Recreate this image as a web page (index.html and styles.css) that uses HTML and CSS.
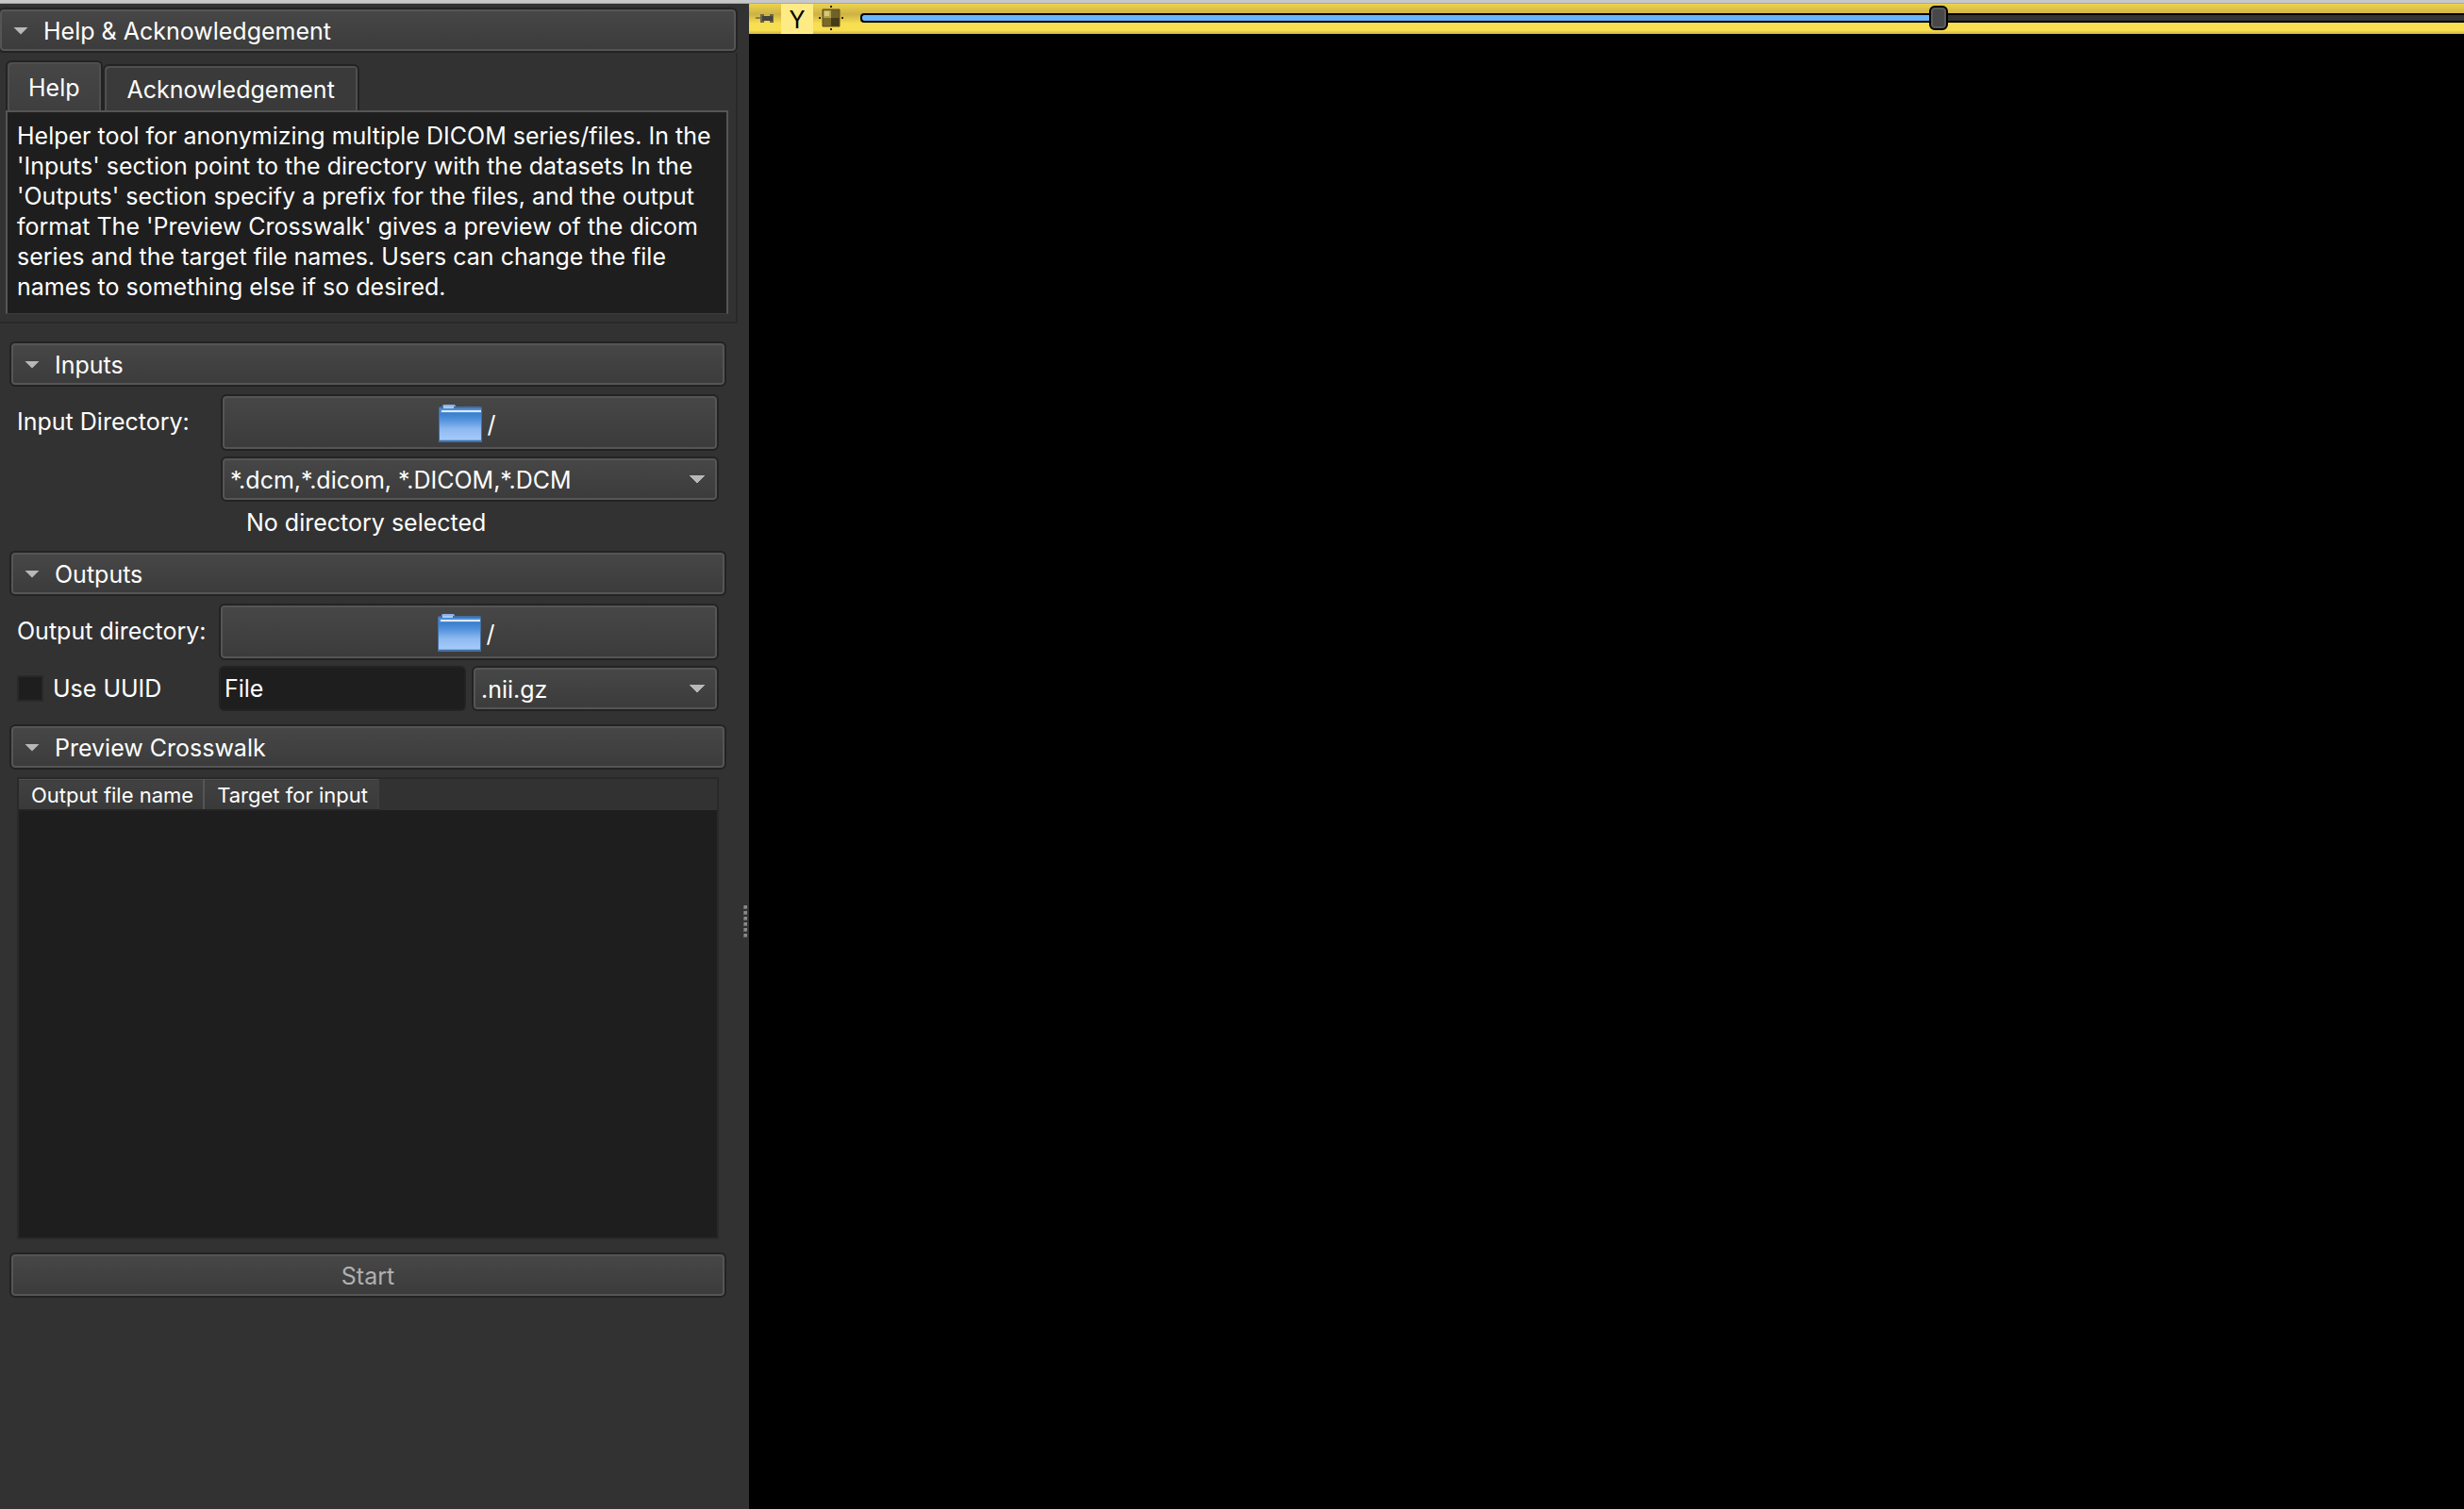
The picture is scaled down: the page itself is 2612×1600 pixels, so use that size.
FILE: index.html
```html
<!DOCTYPE html>
<html lang="en">
<head>
<meta charset="utf-8">
<title>DICOM anonymizer</title>
<link rel="stylesheet" href="styles.css">
</head>
<body>
<div class="app">
  <aside class="panel">
    <section class="help">
      <button class="bar bar-help" type="button"><span class="caret"></span>Help &amp; Acknowledgement</button>
      <div class="help-frame">
        <div class="tabs" role="tablist">
          <button class="tab tab-active" type="button" role="tab" aria-selected="true">Help</button>
          <button class="tab" type="button" role="tab" aria-selected="false">Acknowledgement</button>
        </div>
        <p class="help-text">Helper tool for anonymizing multiple DICOM series/files. In the<br>'Inputs' section point to the directory with the datasets In the<br>'Outputs' section specify a prefix for the files, and the output<br>format The 'Preview Crosswalk' gives a preview of the dicom<br>series and the target file names. Users can change the file<br>names to something else if so desired.</p>
      </div>
    </section>

    <div class="module">
      <button class="bar" type="button"><span class="caret"></span>Inputs</button>
      <div class="form form-inputs">
        <label class="dir-label" for="input-dir">Input Directory:</label>
        <button class="raised dir" id="input-dir" type="button">
          <svg class="folder" width="48" height="42" viewBox="0 0 48 42" aria-hidden="true"><use href="#folder"/></svg>/
        </button>
        <select class="raised combo second" aria-label="File filter"><option>*.dcm,*.dicom, *.DICOM,*.DCM</option></select>
        <span class="status second">No directory selected</span>
      </div>

      <button class="bar" type="button"><span class="caret"></span>Outputs</button>
      <div class="form form-outputs">
        <label class="dir-label" for="output-dir">Output directory:</label>
        <button class="raised dir" id="output-dir" type="button">
          <svg class="folder" width="48" height="42" viewBox="0 0 48 42" aria-hidden="true"><use href="#folder"/></svg>/
        </button>
        <label class="check"><input type="checkbox">Use UUID</label>
        <div class="pair">
          <input class="field" type="text" value="File" aria-label="File prefix">
          <select class="raised combo" aria-label="Output format"><option>.nii.gz</option></select>
        </div>
      </div>

      <button class="bar" type="button"><span class="caret"></span>Preview Crosswalk</button>
      <div class="table-box">
        <table>
          <thead><tr><th>Output file name</th><th>Target for input</th></tr></thead>
        </table>
      </div>
      <button class="bar start" type="button" disabled>Start</button>
    </div>
    <div class="grip" aria-hidden="true"><i></i><i></i><i></i><i></i><i></i><i></i></div>
  </aside>

  <main class="view">
    <div class="slicebar">
      <button class="tool pin" type="button" aria-label="Pin">
        <svg width="20" height="14" viewBox="0 0 20 14"><path d="M0 7h7" stroke="#8f7f3a" stroke-width="2"/><path d="M5 3h4v2h6V3h4v9h-4v-2H9v2H5z" fill="#6b6648"/><path d="M7 5h11v5H7z" fill="#45443c"/></svg>
      </button>
      <button class="tool letter" type="button">Y</button>
      <button class="tool fit" type="button" aria-label="Fit to window">
        <svg width="26" height="26" viewBox="0 0 26 26"><path d="M4 4h18v18H4z" fill="#776725"/><path d="M5 5h8v8H5z" fill="#b3a14a"/><path d="M6 6h5v5H6z" fill="#d8c878"/><path d="M13 5h8v8h-8z" fill="#6f6128"/><path d="M13 13h9v9h-9z" fill="#463c16"/><path d="M5 13h8v8H5z" fill="#7a6a2a"/><path d="M4 4h18v18H4z" fill="none" stroke="#5c4f1e"/><path d="M12 0h2v2h-2zM12 24h2v2h-2zM0 12h2v2H0zM24 12h2v2h-2z" fill="#2c270f"/></svg>
      </button>
      <input class="slider" type="range" min="0" max="1000" value="674" style="--fill: 67.4%" aria-label="Slice offset">
    </div>
  </main>
</div>
<svg class="defs" width="0" height="0" aria-hidden="true">
  <defs>
    <linearGradient id="folder-face" x1="0" y1="0" x2="0" y2="1">
      <stop offset="0" stop-color="#3a7fcb"/><stop offset=".25" stop-color="#5393df"/><stop offset=".6" stop-color="#8fbaf0"/><stop offset="1" stop-color="#a6cbfb"/>
    </linearGradient>
    <symbol id="folder" viewBox="0 0 48 42">
      <path d="M5 2q0-2 2-2h10q2 0 2 2v2H5z" fill="#8db4ea"/>
      <path d="M1 4q0-2 2-2h42q2 0 2 2v36H1z" fill="#466f9f"/>
      <path d="M2 4h44v34H2z" fill="#4c8cd8"/>
      <path d="M6 2h11v2H6z" fill="#a9c9f4"/>
      <path d="M4 6h42v2H4z" fill="#dfe9f7"/>
      <path d="M2 9h44v29H2z" fill="url(#folder-face)"/>
      <path d="M2 37h44v1H2z" fill="#75b0f5"/>
    </symbol>
  </defs>
</svg>
</body>
</html>
```

FILE: styles.css
```css
* { box-sizing: border-box; }

body {
  margin: 0;
  background: #000;
  color: #fff;
  font: 25px/32px Inter, "Liberation Sans", sans-serif;
}

button, input, select { margin: 0; font: inherit; color: inherit; }

.defs { position: absolute; }

.app {
  display: flex;
  min-height: 100vh;
  padding-top: 1px;
  border-top: 3px solid #c8c8c8;
  background: #a8a8a8;
}

.panel {
  position: relative;
  flex: 0 0 794px;
  background: #323232;
}

/* Raised controls: dark outline with a lighter inner edge */
.bar, .raised {
  border: 2px solid #232323;
  border-radius: 6px;
  background: linear-gradient(#474747, #3b3b3b);
  box-shadow: inset 0 0 0 2px #555;
}

.bar {
  display: flex;
  align-items: center;
  width: 100%;
  height: 48px;
  padding: 1px 14px 0;
  text-align: left;
}

.caret {
  width: 16px;
  height: 8px;
  margin-right: 16px;
  background: #b8b8b8;
  clip-path: polygon(0 0, 100% 0, 50% 100%);
}

.help { margin: 0 12px 0 -2px; padding-top: 4px; }

.help-frame {
  padding: 8px 8px 8px;
  border: solid #292929;
  border-width: 0 2px 2px 0;
}

.tabs {
  display: flex;
  align-items: flex-end;
}

.tab {
  height: 49px;
  padding: 2px 24px 0;
  border: 2px solid #232323;
  border-bottom: 0;
  border-radius: 6px 6px 0 0;
  background: #3a3a3a;
  box-shadow: inset 2px 2px #4f4f4f, inset -2px 0 #4f4f4f;
}

.tab-active {
  height: 53px;
  padding: 2px 22px 0;
  background: linear-gradient(#464646, #3f3f3f);
}

.help-text {
  margin: 0;
  padding: 9px 0 12px 10px;
  border: 2px solid #555;
  border-bottom: 1px solid #3c3c3c;
  background: #1e1e1e;
  white-space: nowrap;
}

.module { padding: 19px 24px 0 10px; }

.form {
  display: grid;
  row-gap: 6px;
  padding: 8px 8px 0;
}

.form-inputs {
  grid-template-columns: 216px 1fr;
  padding-bottom: 14px;
}

.form-outputs {
  grid-template-columns: 214px 1fr;
  padding-bottom: 14px;
}

.second { grid-column: 2; }

.dir-label { padding-top: 13px; }

.dir {
  display: flex;
  align-items: center;
  justify-content: center;
  gap: 4px;
  height: 60px;
  padding: 3px 6px 0 0;
}

.folder { display: block; }

.combo {
  width: 100%;
  height: 48px;
  padding: 1px 8px 0;
  appearance: none;
  background:
    conic-gradient(from -45deg at 50% 100%, #b8b8b8 90deg, transparent 0) right 13px center / 16px 8px no-repeat,
    linear-gradient(#474747, #3b3b3b);
}

.status { padding-left: 27px; }

.check {
  display: flex;
  align-items: center;
  gap: 10px;
}

.check input {
  appearance: none;
  width: 28px;
  height: 28px;
  border: 2px solid #292929;
  background: #1e1e1e;
}

.pair {
  display: grid;
  grid-template-columns: 262px 1fr;
  column-gap: 6px;
}

.field {
  width: 100%;
  height: 48px;
  padding: 0 4px;
  border: 2px solid #232323;
  border-radius: 6px;
  background: #1e1e1e;
}

.table-box {
  height: 490px;
  margin: 8px 8px 14px;
  border: 2px solid #292929;
  background: linear-gradient(#323232 33px, #1e1e1e 0);
}

table { border-collapse: collapse; }

th {
  height: 32px;
  padding: 1px 10px 0 13px;
  border-right: 2px solid #555;
  border-top: 1px solid #505050;
  border-bottom: 2px solid #232323;
  background: linear-gradient(#414141, #393939);
  font-size: 22px;
  font-weight: 400;
  line-height: 28px;
  white-space: nowrap;
}

th:last-child { border-right-color: #3f3f3f; }

.start {
  justify-content: center;
  color: #b0b0b0;
}

.grip {
  position: absolute;
  top: 956px;
  right: 2px;
  display: grid;
  gap: 2px;
}

.grip i {
  width: 4px;
  height: 4px;
  background: #8a8a8a;
  border: solid #666;
  border-width: 0 0 1px 1px;
}

.view { flex: 1; min-width: 0; background: #000; }

.slicebar {
  display: flex;
  align-items: flex-start;
  height: 32px;
  background: linear-gradient(#ecd24e, #cdb244 35%, #f8df52 66%, #f8df52 88%, #cdb244);
}

.tool {
  display: flex;
  align-items: center;
  justify-content: center;
  width: 34px;
  height: 32px;
  padding: 0;
  border: 0;
  background: none;
  color: #000;
}

.tool svg { margin-bottom: 2px; }

.letter { padding-top: 1px; background: #ffeb85; }

.fit { width: 50px; padding-right: 12px; }

.slider {
  flex: 1;
  min-width: 0;
  height: 26px;
  margin: 2px 0 0;
  appearance: none;
  background: none;
}

.slider::-webkit-slider-runnable-track {
  height: 10px;
  border: 2px solid #000;
  border-right: 0;
  border-radius: 4px 0 0 4px;
  background: linear-gradient(90deg, #69b6fc var(--fill), #333 0);
}

.slider::-webkit-slider-thumb {
  appearance: none;
  width: 20px;
  height: 26px;
  margin-top: -10px;
  border: 2px solid #000;
  border-radius: 6px;
  background: #484848;
  box-shadow: inset 0 0 0 2px #5c5c5c;
}
```
